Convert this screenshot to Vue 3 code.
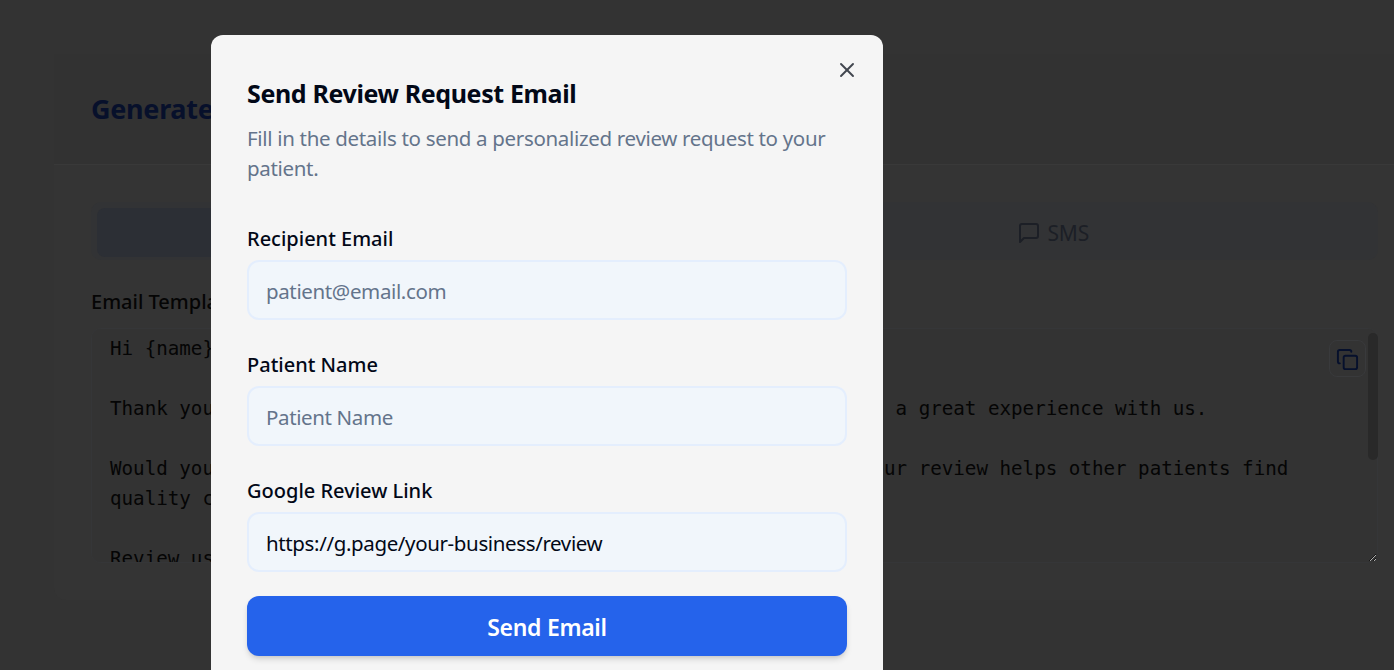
<script setup>
const template = `Hi {name},

Thank you for visiting {business_name} recently! We do hope you had a great experience with us.

Would you mind taking a moment to share your feedback on Google? Your review helps other patients find quality care.

Review us here: {link}

It only takes a minute and means a lot to our team.

Thank you for your support!

Best regards,
{business_name}
{phone}`
const fields = [
  { label: 'Recipient Email', placeholder: 'patient@email.com', value: '' },
  { label: 'Patient Name', placeholder: 'Patient Name', value: '' },
  { label: 'Google Review Link', placeholder: '', value: 'https://g.page/your-business/review' },
]
</script>

<template>
  <div class="page">
    <section class="card">
      <header class="card-head">
        <h1 class="page-title">Generate Review Request</h1>
      </header>
      <div class="card-body">
        <div class="tabs">
          <div class="tab active">Email</div>
          <div class="tab">
            <svg class="sms-icon" viewBox="0 0 24 24" fill="none" stroke="currentColor" stroke-width="2" stroke-linecap="round" stroke-linejoin="round">
              <path d="M21 15a2 2 0 0 1-2 2H7l-4 4V5a2 2 0 0 1 2-2h14a2 2 0 0 1 2 2z" />
            </svg>
            SMS
          </div>
        </div>
        <div class="tpl-label">Email Template</div>
        <div class="tpl-wrap">
          <textarea class="tpl" readonly :value="template"></textarea>
          <span class="thumb"></span>
          <button class="copy" type="button" aria-label="Copy">
            <svg viewBox="0 0 24 24" fill="none" stroke="currentColor" stroke-width="2" stroke-linecap="round" stroke-linejoin="round">
              <rect x="8" y="8" width="14" height="14" rx="2" ry="2" />
              <path d="M4 16c-1.1 0-2-.9-2-2V4c0-1.1.9-2 2-2h10c1.1 0 2 .9 2 2" />
            </svg>
          </button>
        </div>
      </div>
    </section>

    <div class="overlay">
      <div class="modal">
        <button class="close" type="button" aria-label="Close">
          <svg viewBox="0 0 24 24" fill="none" stroke="currentColor" stroke-width="1.9" stroke-linecap="round" stroke-linejoin="round">
            <path d="M18 6 6 18" />
            <path d="m6 6 12 12" />
          </svg>
        </button>
        <h2 class="title">Send Review Request Email</h2>
        <p class="desc">Fill in the details to send a personalized review request to your patient.</p>
        <form class="form" @submit.prevent>
          <div class="fields">
            <label v-for="f in fields" :key="f.label" class="field">
              <span class="label">{{ f.label }}</span>
              <input class="input" :placeholder="f.placeholder" :value="f.value" />
            </label>
          </div>
          <button class="send" type="submit">Send Email</button>
        </form>
      </div>
    </div>
  </div>
</template>

<style>
html, body { margin: 0; background: #333; overflow: hidden; }
</style>

<style scoped>
* { box-sizing: border-box; }
.page {
  height: 670px;
  overflow: hidden;
  position: relative;
  padding: 54px 0 0 54px;
  font-family: "Noto Sans", "Open Sans", sans-serif;
  background: #333;
}
.card {
  width: 1361px;
  background: #343434;
  border-radius: 12px;
}
.card-head {
  height: 111px;
  padding: 33px 37px 0;
  background: #323232;
  border-bottom: 1px solid #393939;
}
.page-title {
  margin: 0;
  font-size: 27px;
  line-height: 44px;
  font-weight: 700;
  letter-spacing: -0.3px;
  color: #07102b;
}
.card-body { padding: 37px; }
.tabs {
  display: grid;
  grid-template-columns: 1fr 1fr;
  height: 58px;
  padding: 6px 6px 3px;
  border-radius: 10px;
  background: #323335;
}
.tab {
  display: flex;
  align-items: center;
  justify-content: center;
  gap: 6px;
  font-size: 21px;
  letter-spacing: -0.2px;
  color: #1c1f26;
  border-radius: 8px;
}
.tab.active { background: #2c2f35; }
.sms-icon { width: 24px; height: 24px; }
.tpl-label {
  margin-top: 28px;
  font-size: 20px;
  line-height: 28px;
  font-weight: 500;
  color: #050505;
}
.tpl-wrap { position: relative; margin-top: 12px; }
.tpl {
  display: block;
  width: 100%;
  height: 235px;
  padding: 5px 11px 0 18px;
  border: 1px solid #353638;
  border-radius: 10px;
  background: #333;
  color: #050505;
  font-family: "DejaVu Sans Mono", monospace;
  font-size: 19.2px;
  line-height: 30px;
  outline: none;
  overflow-y: scroll;
  resize: both;
}
.thumb {
  position: absolute;
  top: 5px;
  right: 0;
  width: 10px;
  height: 127px;
  border-radius: 5px;
  background: #292929;
}
.copy {
  position: absolute;
  top: 12px;
  right: 12px;
  width: 37px;
  height: 37px;
  padding: 6px;
  display: flex;
  border: 1px solid #393a3c;
  border-radius: 8px;
  background: transparent;
  color: #06102c;
}
.copy svg { width: 25px; height: 25px; }
.overlay {
  position: fixed;
  inset: 0;
  overflow: hidden;
}
.modal {
  position: relative;
  width: 672px;
  margin: 35px 0 0 211px;
  padding: 36px;
  background: #f5f5f5;
  border-radius: 12px;
  height: 700px;
}
.close {
  position: absolute;
  top: 23px;
  right: 24px;
  width: 24px;
  height: 24px;
  padding: 0;
  border: 0;
  background: none;
  color: #41464f;
}
.close svg { width: 24px; height: 24px; display: block; }
.title {
  margin: 0;
  font-size: 25px;
  line-height: 44px;
  font-weight: 700;
  letter-spacing: -0.37px;
  color: #020817;
}
.desc {
  margin: 8px 0 0;
  font-size: 20.5px;
  line-height: 30px;
  letter-spacing: -0.32px;
  color: #64748b;
}
.form { display: flex; flex-direction: column; gap: 24px; margin-top: 42px; }
.fields { display: flex; flex-direction: column; gap: 31px; }
.field { display: flex; flex-direction: column; }
.label {
  font-size: 20px;
  line-height: 28px;
  font-weight: 500;
  color: #020817;
  margin-bottom: 7px;
}
.input {
  height: 60px;
  padding: 2px 17px 0;
  border: 2px solid #e4eefd;
  border-radius: 12px;
  background: #f1f6fb;
  color: #020817;
  font-family: inherit;
  font-size: 20.5px;
  letter-spacing: -0.37px;
  outline: none;
}
.input::placeholder { color: #64748b; opacity: 1; }
.send {
  height: 60px;
  padding: 2px 0 0;
  border: 0;
  border-radius: 12px;
  background: #2563eb;
  color: #fff;
  font-family: inherit;
  font-size: 23px;
  font-weight: 600;
  letter-spacing: -0.3px;
  box-shadow: 0 4px 6px -1px rgba(0,0,0,.15), 0 2px 4px -2px rgba(0,0,0,.1);
}
</style>
